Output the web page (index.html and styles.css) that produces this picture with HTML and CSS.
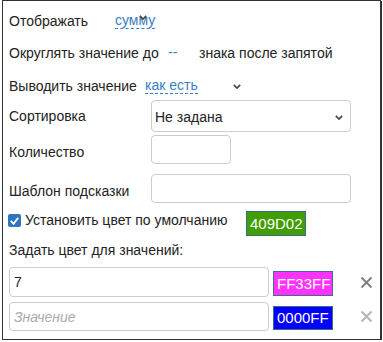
FILE: index.html
```html
<!DOCTYPE html>
<html>
<head>
  <meta charset="utf-8">
  <link rel="stylesheet" href="styles.css">
</head>
<body>
  <div class="panel">
    <!-- Aggregate -->
    <div class="row row-show">
      <span class="label label-show">Отображать</span>
      <span class="link">сумму
        <svg class="chev chev-over" viewBox="0 0 10 6"><polyline points="1,1 5,5 9,1"/></svg>
      </span>
    </div>

    <!-- Rounding -->
    <div class="row row-round">
      <span class="label">Округлять значение до</span>
      <span class="link link-plain digits">--</span>
      <span class="label">знака после запятой</span>
    </div>

    <!-- Output mode -->
    <div class="row row-mode">
      <span class="label label-mode">Выводить значение</span>
      <span class="link">как есть</span>
      <svg class="chev chev-mode" viewBox="0 0 10 6"><polyline points="1,1 5,5 9,1"/></svg>
    </div>

    <div class="row row-field row-sort">
      <span class="label label-field">Сортировка</span>
      <div class="select">
        <span>Не задана</span>
        <svg class="chev" viewBox="0 0 10 6"><polyline points="1,1 5,5 9,1"/></svg>
      </div>
    </div>

    <div class="row row-field row-count">
      <span class="label label-field">Количество</span>
      <input class="input input-short" type="text">
    </div>

    <div class="row row-field row-tpl">
      <span class="label label-field">Шаблон подсказки</span>
      <input class="input input-wide" type="text">
    </div>

    <!-- Default colour -->
    <div class="row row-default">
      <span class="checkbox">
        <svg viewBox="0 0 14 14"><polyline points="3,7.5 6,10.5 11,4"/></svg>
      </span>
      <span class="label label-check">Установить цвет по умолчанию</span>
      <span class="chip chip-default" style="background: #409D02">409D02</span>
    </div>

    <div class="row row-title">
      <span class="label">Задать цвет для значений:</span>
    </div>

    <div class="row row-value row-value-first">
      <input class="input input-value" type="text" value="7">
      <span class="chip" style="background: #FF33FF">FF33FF</span>
      <svg class="remove" viewBox="0 0 13 13"><path d="M1.5 1.5 L11.5 11.5 M11.5 1.5 L1.5 11.5"/></svg>
    </div>

    <div class="row row-value row-value-new">
      <input class="input input-value" type="text" placeholder="Значение">
      <span class="chip" style="background: #0000FF">0000FF</span>
      <svg class="remove remove-muted" viewBox="0 0 13 13"><path d="M1.5 1.5 L11.5 11.5 M11.5 1.5 L1.5 11.5"/></svg>
    </div>
  </div>
</body>
</html>
```

FILE: styles.css
```css
body {
  margin: 0;
  background: #fff;
  font-family: "Liberation Sans", Arial, sans-serif;
  font-size: 14px;
  color: #222;
}

.panel {
  box-sizing: border-box;
  width: 379px;
  height: 340px;
  margin-left: 2px;
  padding: 0 0 0 6px;
  border: 1px solid #333;
  box-shadow: 1px 1px 0 #333;
  background: #fff;
}

.row {
  display: flex;
  align-items: center;
  line-height: 16px;
}

.label {
  white-space: nowrap;
}

/* Top rows with inline pickers */
.row-show {
  height: 30px;
  margin-top: 5px;
}

.label-show {
  width: 106px;
}

.row-round {
  height: 29px;
  margin-top: 2px;
}

.row-round .label:first-child {
  width: 159px;
}

.row-mode {
  height: 29px;
  margin-top: 4px;
}

.label-mode {
  width: 136px;
}

.link {
  position: relative;
  color: #3b7dc4;
  border-bottom: 1px dashed #3b7dc4;
  line-height: 15px;
}

.link-plain {
  border-bottom: none;
}

.digits {
  width: 31px;
}

.chev {
  width: 8px;
  height: 5px;
  fill: none;
  stroke: #444;
  stroke-width: 2;
}

.chev-over {
  position: absolute;
  left: 24px;
  top: 2px;
}

.chev-mode {
  margin-left: 35px;
  margin-top: 2px;
}

/* Labelled fields */
.label-field {
  width: 142px;
  padding-top: 5px;
}

.row-sort {
  height: 32px;
}

.row-sort .label-field {
  padding-top: 0;
}

.row-count {
  height: 29px;
  margin-top: 3px;
}

.row-tpl {
  height: 29px;
  margin-top: 10px;
}

.select {
  box-sizing: border-box;
  display: flex;
  align-items: center;
  justify-content: space-between;
  width: 200px;
  height: 32px;
  padding: 2px 7px 0 3px;
  border: 1px solid #ccc;
  border-radius: 4px;
}

.input {
  box-sizing: border-box;
  height: 29px;
  margin: 0;
  padding: 0 4px;
  border: 1px solid #ccc;
  border-radius: 4px;
  font-family: inherit;
  font-size: 14px;
  color: #222;
  outline: none;
}

.input::placeholder {
  color: #aaa;
  font-style: italic;
}

.input-short {
  width: 80px;
}

.input-wide {
  width: 200px;
}

/* Default colour */
.row-default {
  align-items: flex-start;
  height: 25px;
  margin-top: 8px;
}

.checkbox {
  box-sizing: border-box;
  width: 13px;
  height: 13px;
  margin: 3px 4px 0 -1px;
  border-radius: 2px;
  background: #2f74c0;
}

.checkbox svg {
  display: block;
  width: 13px;
  height: 13px;
  fill: none;
  stroke: #fff;
  stroke-width: 2;
}

.label-check {
  width: 221px;
  margin-top: 1px;
}

.chip {
  box-sizing: border-box;
  display: flex;
  align-items: center;
  width: 60px;
  height: 25px;
  padding: 1px 0 0 3px;
  border: 1px solid #3c6e8c;
  color: #fff;
  font-size: 15px;
}

/* Value colours */
.row-title {
  height: 16px;
  margin-top: 6px;
}

.row-value {
  height: 30px;
}

.row-value-first {
  margin-top: 9px;
}

.row-value-new {
  height: 29px;
  margin-top: 5px;
}

.row-value-new .chip {
  height: 24px;
}

.input-value {
  width: 260px;
  height: 100%;
}

.row-value .chip {
  margin-left: 4px;
  margin-top: 2px;
}

.remove {
  width: 13px;
  height: 13px;
  margin-left: 27px;
  fill: none;
  stroke: #808080;
  stroke-width: 2;
}

.remove-muted {
  stroke: #b5b5b5;
}
```
